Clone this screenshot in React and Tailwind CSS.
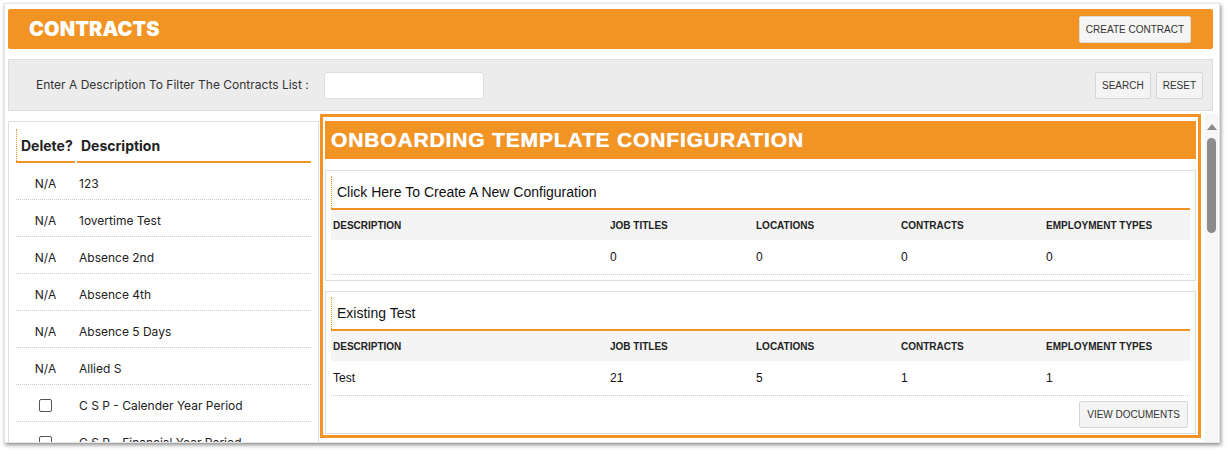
const leftRows = [
  { del: "N/A", desc: "123" },
  { del: "N/A", desc: "1overtime Test" },
  { del: "N/A", desc: "Absence 2nd" },
  { del: "N/A", desc: "Absence 4th" },
  { del: "N/A", desc: "Absence 5 Days" },
  { del: "N/A", desc: "Allied S" },
  { del: "box", desc: "C S P - Calender Year Period" },
  { del: "box", desc: "C S P - Financial Year Period" },
];

const cols = ["Description", "Job Titles", "Locations", "Contracts", "Employment Types"];

const ConfigCard = ({ title, values, showButton }) => {
  return (
    <div className="border border-[#dddddd] bg-white px-[5px] pt-[5px] pb-[5px]">
      <div className="border-b-2 border-solid border-[#F29423]">
        <div className="h-[32px] flex items-center pl-[5px] pt-[1px] border-l border-dotted border-[#F29423] text-[14px] text-[#111]">
          {title}
        </div>
      </div>
      <div className="grid grid-cols-[277px_146px_145px_145px_1fr] h-[30px] items-center bg-[#f4f4f4]">
        {cols.map((c) => (
          <div key={c} className="pl-[2px] text-[10px] font-bold uppercase text-[#222]">
            {c}
          </div>
        ))}
      </div>
      <div className="grid grid-cols-[277px_146px_145px_145px_1fr] h-[35px] items-center border-b border-dotted border-[#cccccc] text-[12px] text-[#111]">
        {values.map((v, i) => (
          <div key={i} className="pl-[2px]">
            {v}
          </div>
        ))}
      </div>
      {showButton && (
        <div className="flex justify-end pr-[2px] pt-[5px]">
          <button className="h-[27px] px-[7px] bg-[#f4f4f4] border border-[#d6d6d6] rounded-[2px] text-[10px] text-[#333]">
            VIEW DOCUMENTS
          </button>
        </div>
      )}
    </div>
  );
};

const App = () => {
  return (
    <div className="w-[1230px] h-[450px] bg-white pt-[3px] pl-[4px] font-['Inter',sans-serif]">
      <div className="w-[1216px] h-[440px] bg-white border border-[#e4e4e4] shadow-[1px_2px_4px_rgba(0,0,0,0.45)] overflow-hidden flex flex-col pl-[3px] pt-[5px]">
        <div className="w-[1205px] h-[40px] shrink-0 bg-[#F29423] rounded-[2px] flex items-center justify-between pl-[21px] pr-[22px]">
          <div className="text-white font-black text-[20px] tracking-[0.1px]">CONTRACTS</div>
          <button className="h-[27px] px-[6px] bg-[#f5f5f5] border border-[#dddddd] rounded-[2px] text-[10px] text-[#333] font-['Liberation_Sans',sans-serif]">
            CREATE CONTRACT
          </button>
        </div>

        <div className="w-[1205px] h-[52px] shrink-0 mt-[10px] bg-[#ececec] border border-[#dcdcdc] flex items-center pl-[27px] pr-[9px]">
          <div className="text-[12px] text-[#333]">Enter A Description To Filter The Contracts List :</div>
          <input type="text" className="ml-[15px] w-[160px] h-[27px] bg-white border border-[#dddddd] rounded-[3px] outline-none" />
          <div className="flex-1" />
          <button className="h-[27px] px-[6px] bg-[#f4f4f4] border border-[#d6d6d6] rounded-[2px] text-[10px] text-[#333] font-['Liberation_Sans',sans-serif]">
            SEARCH
          </button>
          <button className="ml-[5px] h-[27px] px-[6px] bg-[#f4f4f4] border border-[#d6d6d6] rounded-[2px] text-[10px] text-[#333] font-['Liberation_Sans',sans-serif]">
            RESET
          </button>
        </div>

        <div className="flex flex-1 min-h-0 mt-[3px] items-start">
          <div className="w-[311px] h-full mt-[7px] border border-[#dddddd] px-[7px] pt-[7px] overflow-hidden">
            <div className="flex h-[34px] items-stretch text-[14px] font-bold text-[#222]">
              <div className="w-[59px] border-b-2 border-solid border-[#F29423]">
                <div className="h-full flex items-center pl-[4px] border-l border-dotted border-[#F29423]">Delete?</div>
              </div>
              <div className="flex-1 ml-[2px] flex items-center pl-[4px] border-b-2 border-solid border-[#F29423]">
                Description
              </div>
            </div>
            {leftRows.map((r, i) => (
              <div key={i} className="flex h-[37px] pt-[5px] items-center border-b border-dotted border-[#cccccc] text-[12px] text-[#222]">
                <div className="w-[59px] flex justify-center">
                  {r.del === "box" ? (
                    <div className="w-[13px] h-[13px] border border-[#555] rounded-[2px] bg-white" />
                  ) : (
                    r.del
                  )}
                </div>
                <div className="ml-[2px] pl-[2px]">{r.desc}</div>
              </div>
            ))}
          </div>

          <div className="ml-[1px] w-[881px] h-[324px] border-[3px] border-[#F29423] pt-[4px] px-[2px] overflow-hidden font-['Liberation_Sans',sans-serif]">
            <div className="h-[38px] bg-[#F29423] flex items-center pl-[6px] text-white font-bold text-[21px] tracking-[0.85px] [text-shadow:0_0_0.8px_white]">
              ONBOARDING TEMPLATE CONFIGURATION
            </div>
            <div className="mt-[11px]">
              <ConfigCard title="Click Here To Create A New Configuration" values={["", "0", "0", "0", "0"]} />
            </div>
            <div className="mt-[10px]">
              <ConfigCard title="Existing Test" values={["Test", "21", "5", "1", "1"]} showButton />
            </div>
          </div>

          <div className="ml-[4px] w-[13px] h-full bg-[#f6f6f6] flex flex-col items-center pt-[10px]">
            <div className="w-0 h-0 border-l-[5px] border-r-[5px] border-b-[6px] border-l-transparent border-r-transparent border-b-[#8a8a8a]" />
            <div className="mt-[8px] w-[9px] h-[95px] rounded-full bg-[#8c8c8c]" />
          </div>
        </div>
      </div>
    </div>
  );
};

export default App;
